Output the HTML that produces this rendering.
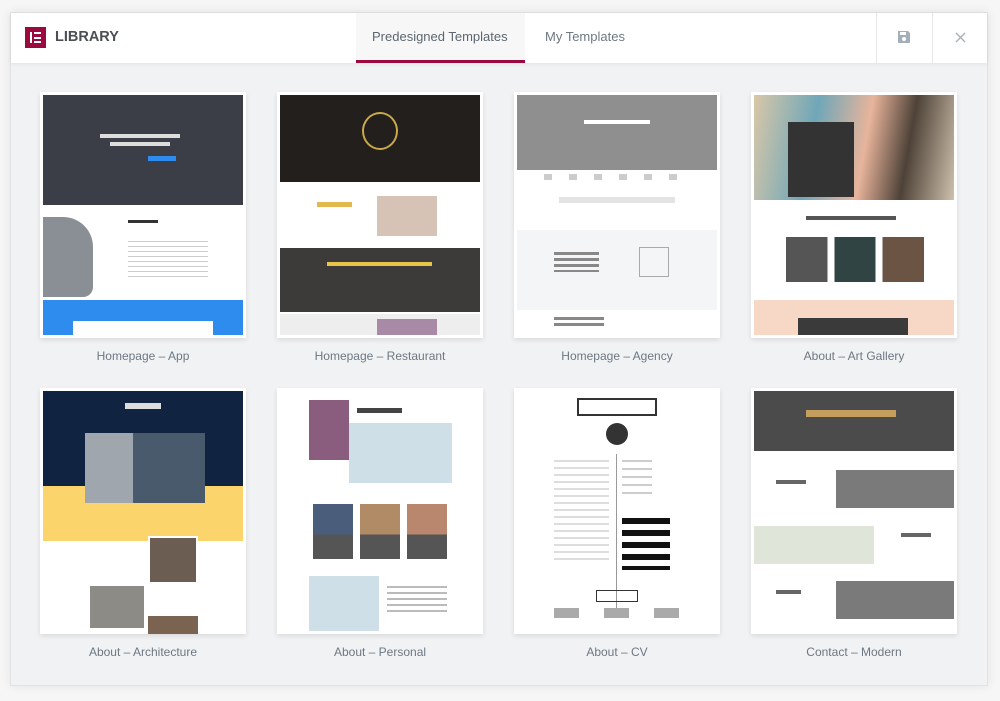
<!DOCTYPE html>
<html><head><meta charset="utf-8"><style>
*{box-sizing:border-box;margin:0;padding:0}
body{width:1000px;height:701px;background:#f6f6f6;font-family:"Liberation Sans",sans-serif;position:relative;overflow:hidden}
.modal{position:absolute;left:10px;top:12px;width:978px;height:674px;background:#f1f2f4;border:1px solid #e2e2e2;box-shadow:0 0 10px rgba(0,0,0,.08)}
.hdr{position:absolute;left:0;top:0;width:100%;height:50px;background:#fff;box-shadow:0 1px 4px rgba(0,0,0,.07)}
.logo{position:absolute;left:14px;top:14px;width:21px;height:21px;background:#9b0a3e}
.logo i{position:absolute;background:#fff}
.t{position:absolute;font-size:13px;color:#6d7882}
.c{position:absolute;width:206px;height:246px;background:#fff;box-shadow:0 2px 5px rgba(0,0,0,.1);overflow:hidden}
.c div{position:absolute}
.lbl{position:absolute;width:206px;text-align:center;font-size:12px;color:#6d7882}
</style></head><body>
<div class="modal">
 <div class="hdr">
  <div class="logo"><i style="left:5px;top:5px;width:2px;height:11px"></i><i style="left:9px;top:5px;width:7px;height:2px"></i><i style="left:9px;top:9.5px;width:7px;height:2px"></i><i style="left:9px;top:14px;width:7px;height:2px"></i></div>
  <div style="position:absolute;left:44px;top:16px;font-size:14.5px;font-weight:bold;color:#4a4f55">LIBRARY</div>
  <div style="position:absolute;left:345px;top:0;width:169px;height:50px;background:#f7f7f8;border-bottom:3px solid #9b0a3e"></div>
  <div class="t" style="left:361px;top:16px;color:#5c6670">Predesigned Templates</div>
  <div class="t" style="left:534px;top:16px">My Templates</div>
  <div style="position:absolute;left:865px;top:0;width:1px;height:50px;background:#e6e6e6"></div>
  <div style="position:absolute;left:921px;top:0;width:1px;height:50px;background:#e6e6e6"></div>
  <svg style="position:absolute;left:886px;top:17px" width="14" height="14" viewBox="0 0 14 14"><path d="M1 1h10l2 2v10H1z" fill="#a4afb7"/><rect x="3" y="2" width="6" height="3" fill="#fff"/><circle cx="7" cy="9" r="2" fill="#fff"/></svg>
  <svg style="position:absolute;left:944px;top:19px" width="11" height="11" viewBox="0 0 11 11"><path d="M1 1L10 10M10 1L1 10" stroke="#a4afb7" stroke-width="1.3"/></svg>
 </div>
</div>

<div class="c" style="left:40px;top:92px">
 <div style="left:3px;top:3px;width:200px;height:110px;background:#3b3e46"></div>
 <div style="left:60px;top:42px;width:80px;height:4px;background:#ddd"></div>
 <div style="left:70px;top:50px;width:60px;height:4px;background:#ddd"></div>
 <div style="left:108px;top:64px;width:28px;height:5px;background:#2f8cef"></div>
 <div style="left:3px;top:125px;width:50px;height:80px;background:#8a8f96;border-radius:0 30px 10px 0"></div>
 <div style="left:88px;top:128px;width:30px;height:3px;background:#333"></div>
 <div style="left:88px;top:145px;width:80px;height:40px;background:repeating-linear-gradient(#fff 0 4px,#ccc 4px 5px)"></div>
 <div style="left:3px;top:208px;width:200px;height:35px;background:#2f8cef"></div>
 <div style="left:33px;top:229px;width:140px;height:14px;background:#fff"></div>
</div>
<div class="lbl" style="left:40px;top:349px">Homepage – App</div>

<div class="c" style="left:277px;top:92px">
 <div style="left:3px;top:3px;width:200px;height:87px;background:#221f1c"></div>
 <div style="left:85px;top:20px;width:36px;height:38px;border:2px solid #c9a94a;border-radius:50%"></div>
 <div style="left:40px;top:110px;width:35px;height:5px;background:#e2b84f"></div>
 <div style="left:100px;top:104px;width:60px;height:40px;background:#d6c3b5"></div>
 <div style="left:3px;top:156px;width:200px;height:64px;background:#3c3b39"></div>
 <div style="left:50px;top:170px;width:105px;height:4px;background:#e6c44a"></div>
 <div style="left:3px;top:222px;width:200px;height:21px;background:#eeeeee"></div>
 <div style="left:100px;top:227px;width:60px;height:16px;background:#a88aa6"></div>
</div>
<div class="lbl" style="left:277px;top:349px">Homepage – Restaurant</div>

<div class="c" style="left:514px;top:92px">
 <div style="left:3px;top:3px;width:200px;height:75px;background:#8f8f90"></div>
 <div style="left:70px;top:28px;width:66px;height:4px;background:#fff"></div>
 <div style="left:30px;top:82px;width:150px;height:6px;background:repeating-linear-gradient(90deg,#ccc 0 8px,#fff 8px 25px)"></div>
 <div style="left:45px;top:105px;width:116px;height:6px;background:#e3e3e3"></div>
 <div style="left:3px;top:138px;width:200px;height:80px;background:#f4f5f7"></div>
 <div style="left:40px;top:160px;width:45px;height:20px;background:repeating-linear-gradient(#888 0 3px,transparent 3px 6px)"></div>
 <div style="left:125px;top:155px;width:30px;height:30px;border:1px solid #aaa"></div>
 <div style="left:40px;top:225px;width:50px;height:12px;background:repeating-linear-gradient(#888 0 3px,transparent 3px 6px)"></div>
</div>
<div class="lbl" style="left:514px;top:349px">Homepage – Agency</div>

<div class="c" style="left:751px;top:92px">
 <div style="left:3px;top:3px;width:200px;height:105px;background:linear-gradient(100deg,#d9c7a8,#6fa7b8 30%,#e8b49b 55%,#4e4238 75%,#cfc1ad)"></div>
 <div style="left:37px;top:30px;width:66px;height:75px;background:#333"></div>
 <div style="left:55px;top:124px;width:90px;height:4px;background:#555"></div>
 <div style="left:35px;top:145px;width:138px;height:45px;background:linear-gradient(90deg,#555 0 30%,#fff 30% 35%,#2f4443 35% 65%,#fff 65% 70%,#6b5444 70%)"></div>
 <div style="left:3px;top:208px;width:200px;height:35px;background:#f7d8c6"></div>
 <div style="left:47px;top:226px;width:110px;height:17px;background:#3a3a3a"></div>
</div>
<div class="lbl" style="left:751px;top:349px">About – Art Gallery</div>

<div class="c" style="left:40px;top:388px">
 <div style="left:3px;top:3px;width:200px;height:95px;background:#102441"></div>
 <div style="left:3px;top:98px;width:200px;height:55px;background:#fbd46b"></div>
 <div style="left:85px;top:15px;width:36px;height:6px;background:#ddd"></div>
 <div style="left:45px;top:45px;width:120px;height:70px;background:linear-gradient(90deg,#9fa6ad 0 40%,#4a5a6d 40%)"></div>
 <div style="left:108px;top:148px;width:50px;height:48px;background:#6c5d52;border:2px solid #fff"></div>
 <div style="left:48px;top:196px;width:58px;height:46px;background:#8d8b86;border:2px solid #fff"></div>
 <div style="left:108px;top:228px;width:50px;height:18px;background:#7a6350"></div>
</div>
<div class="lbl" style="left:40px;top:645px">About – Architecture</div>

<div class="c" style="left:277px;top:388px">
 <div style="left:32px;top:12px;width:40px;height:60px;background:#8a5c7e"></div>
 <div style="left:80px;top:20px;width:45px;height:5px;background:#444"></div>
 <div style="left:72px;top:35px;width:103px;height:60px;background:#cfdfe8"></div>
 <div style="left:36px;top:116px;width:40px;height:55px;background:linear-gradient(#4a5d7a 55%,#555 55%)"></div>
 <div style="left:83px;top:116px;width:40px;height:55px;background:linear-gradient(#b18a66 55%,#555 55%)"></div>
 <div style="left:130px;top:116px;width:40px;height:55px;background:linear-gradient(#b9876e 55%,#555 55%)"></div>
 <div style="left:32px;top:188px;width:70px;height:55px;background:#cfdfe8"></div>
 <div style="left:110px;top:198px;width:60px;height:30px;background:repeating-linear-gradient(#bbb 0 2px,transparent 2px 6px)"></div>
</div>
<div class="lbl" style="left:277px;top:645px">About – Personal</div>

<div class="c" style="left:514px;top:388px">
 <div style="left:63px;top:10px;width:80px;height:18px;border:2px solid #333"></div>
 <div style="left:92px;top:35px;width:22px;height:22px;border-radius:50%;background:#333"></div>
 <div style="left:102px;top:66px;width:1px;height:158px;background:#999"></div>
 <div style="left:40px;top:72px;width:55px;height:100px;background:repeating-linear-gradient(#ddd 0 2px,transparent 2px 7px)"></div>
 <div style="left:108px;top:130px;width:48px;height:52px;background:repeating-linear-gradient(#111 0 6px,transparent 6px 12px)"></div>
 <div style="left:108px;top:72px;width:30px;height:40px;background:repeating-linear-gradient(#ccc 0 2px,transparent 2px 8px)"></div>
 <div style="left:82px;top:202px;width:42px;height:12px;border:1px solid #333"></div>
 <div style="left:40px;top:220px;width:130px;height:10px;background:repeating-linear-gradient(90deg,#aaa 0 25px,transparent 25px 50px)"></div>
</div>
<div class="lbl" style="left:514px;top:645px">About – CV</div>

<div class="c" style="left:751px;top:388px">
 <div style="left:3px;top:3px;width:200px;height:60px;background:#4b4b4b"></div>
 <div style="left:55px;top:22px;width:90px;height:7px;background:#c49e5d"></div>
 <div style="left:85px;top:82px;width:118px;height:38px;background:#7a7a7a"></div>
 <div style="left:25px;top:92px;width:30px;height:4px;background:#666"></div>
 <div style="left:3px;top:138px;width:120px;height:38px;background:#dfe6d9"></div>
 <div style="left:150px;top:145px;width:30px;height:4px;background:#666"></div>
 <div style="left:85px;top:193px;width:118px;height:38px;background:#7a7a7a"></div>
 <div style="left:25px;top:202px;width:25px;height:4px;background:#666"></div>
</div>
<div class="lbl" style="left:751px;top:645px">Contact – Modern</div>
</body></html>
